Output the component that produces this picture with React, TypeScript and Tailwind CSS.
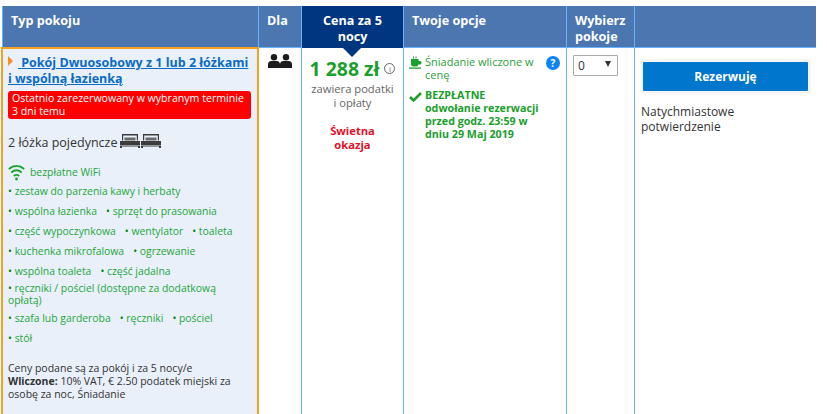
const font = { fontFamily: '"Open Sans", "Noto Sans", sans-serif' };

const facilityRows = [
  { items: ["wspólna łazienka", "sprzęt do prasowania"], cls: "mt-[7px]" },
  { items: ["część wypoczynkowa", "wentylator", "toaleta"], cls: "mt-[7px]" },
  { items: ["kuchenka mikrofalowa", "ogrzewanie"], cls: "mt-[7px]" },
  { items: ["wspólna toaleta", "część jadalna"], cls: "mt-[7px]" },
];

function Facility({ label }: { label: string }) {
  return (
    <span className="mr-[9px] whitespace-nowrap">
      <span className="text-[#008009]">•</span> {label}
    </span>
  );
}

function BedIcon() {
  return (
    <svg width="20" height="14" viewBox="0 0 20 14" fill="#3c3c3c" className="-mt-[4px]">
      <path d="M2 0h16v6.500h-1.200V1.500H3.200V6.500H2z" />
      <path d="M4.500 3.500h11v3h-11z" fill="#6a6a6a" />
      <path d="M0 7h20v4H0zM0 11.500h20v1H0zM0 12.500h2V14H0zM18 12.500h2V14h-2z" />
    </svg>
  );
}

function PersonIcon() {
  return (
    <svg width="12" height="14" viewBox="0 0 12 14" fill="#1c1c1c">
      <circle cx="6" cy="3.200" r="3.200" />
      <path d="M0 14v-3.500C0 8 1.500 7 3.500 7h5C10.500 7 12 8 12 10.500V14z" />
    </svg>
  );
}

function WifiIcon() {
  return (
    <svg width="17" height="17" viewBox="0 0 17 17" fill="none" stroke="#1aa32a" strokeWidth="1.800">
      <path d="M.8 5C5.500 1 11.500 1 16.200 5" />
      <path d="M3.300 8.500C6.500 5.800 10.500 5.800 13.700 8.500" />
      <path d="M5.800 12c1.600-1.300 3.800-1.300 5.400 0" />
      <circle cx="8.500" cy="15" r="1.400" fill="#1aa32a" stroke="none" />
    </svg>
  );
}

function CupIcon() {
  return (
    <svg width="13" height="13" viewBox="0 0 13 13" fill="#1a9e2c" className="mt-[1px] mr-[3px] shrink-0">
      <path d="M2 3h7.500v2H11a1.500 1.500 0 0 1 1.500 1.500v.500A1.500 1.500 0 0 1 11 8.500H9.300C9 10 8 10.500 7 10.500H4.500C3 10.500 2 9.500 2 8z" />
      <path d="M4 .5h1v2H4zM6.500 .5h1v2h-1z" />
      <path d="M0 11.500h12v1.300H0z" />
    </svg>
  );
}

function CheckIcon() {
  return (
    <svg width="13" height="13" viewBox="0 0 13 13" fill="none" stroke="#1a9e2c" strokeWidth="2.600" className="mt-[1px] mr-[3px] shrink-0">
      <path d="M1 7l3.500 3.500L12 3" />
    </svg>
  );
}

export default function App() {
  return (
    <div className="w-[827px] h-[414px] overflow-hidden bg-white pt-[6px] pl-[2px]" style={font}>
      <div className="w-[814px] grid grid-cols-[256px_43px_102px_163px_68px_182px] grid-rows-[42px_380px]">
        {/* header */}
        <div className="bg-[#4b76b0] border-b border-l border-[#66b3ff] text-white font-bold text-[12.600px] leading-[15.500px] pl-[8px] pt-[7px]">
          Typ pokoju
        </div>
        <div className="bg-[#4b76b0] border-b border-l border-[#66b3ff] text-white font-bold text-[12.600px] leading-[15.500px] pl-[8px] pt-[7px]">
          Dla
        </div>
        <div className="relative bg-[#003580] border-l border-[#66b3ff] text-white font-bold text-[12.600px] leading-[15.500px] text-center pt-[7px] px-[10px]">
          Cena za 5 nocy
          <div className="absolute left-[41px] top-[42px] w-0 h-0 border-x-[9px] border-x-transparent border-t-[9px] border-t-[#003580]" />
        </div>
        <div className="bg-[#4b76b0] border-b border-l border-[#66b3ff] text-white font-bold text-[12.600px] leading-[15.500px] pl-[8px] pt-[7px]">
          Twoje opcje
        </div>
        <div className="bg-[#4b76b0] border-b border-l border-[#66b3ff] text-white font-bold text-[12.600px] leading-[15.500px] pl-[8px] pt-[7px]">
          Wybierz pokoje
        </div>
        <div className="bg-[#4b76b0] border-b border-l border-[#66b3ff]" />

        {/* room */}
        <div className="relative z-10 -ml-px -mr-px bg-[#e9f0fa] border-2 border-[#f5a11f] -mt-px pl-[5px] pr-[3px] pt-[6px] text-[#1fa53a] text-[10.400px] leading-[13px]">
          <div className="text-[12.500px] leading-[16px] font-bold text-[#0b6bc4] underline whitespace-nowrap">
            <span className="inline-block align-[1px] mr-[5px] w-0 h-0 border-y-[5px] border-y-transparent border-l-[5px] border-l-[#f5901f]" />
            {" "}Pokój Dwuosobowy z 1 lub 2 łóżkami
            <br />
            i wspólną łazienką
          </div>
          <div className="mt-[4px] bg-[#ff0000] rounded-[3px] text-white text-[10.600px] leading-[13px] px-[4px] py-[1px] w-[243px] whitespace-nowrap">
            Ostatnio zarezerwowany w wybranym terminie
            <br />3 dni temu
          </div>
          <div className="mt-[15px] flex items-center gap-[1px] text-[#333] text-[12.500px] leading-[18px]">
            <span className="mr-[2px]">2 łóżka pojedyncze</span>
            <BedIcon />
            <BedIcon />
          </div>
          <div className="mt-[12px] flex items-center gap-[5px]">
            <WifiIcon />
            <span>bezpłatne WiFi</span>
          </div>
          <div className="mt-[4px]">
            <Facility label="zestaw do parzenia kawy i herbaty" />
          </div>
          {facilityRows.map((row) => (
            <div key={row.items[0]} className={row.cls}>
              {row.items.map((item) => (
                <Facility key={item} label={item} />
              ))}
            </div>
          ))}
          <div className="mt-[4px] leading-[12px]">
            <span className="text-[#008009]">•</span> ręczniki / pościel (dostępne za dodatkową
            <br />
            opłatą)
          </div>
          <div className="mt-[6px]">
            <Facility label="szafa lub garderoba" />
            <Facility label="ręczniki" />
            <Facility label="pościel" />
          </div>
          <div className="mt-[7px]">
            <Facility label="stół" />
          </div>
          <div className="mt-[17px] text-[#333] text-[10.500px]">
            Ceny podane są za pokój i za 5 nocy/e
            <br />
            <b>Wliczone:</b> 10% VAT, € 2.50 podatek miejski za osobę za noc, Śniadanie
          </div>
        </div>

        {/* people */}
        <div className="border-l border-[#66b3ff] pl-[9px] pt-[6px] flex items-start">
          <PersonIcon />
          <PersonIcon />
        </div>

        {/* price */}
        <div className="border-l border-[#66b3ff] text-center pt-[9px]">
          <div className="flex items-center justify-center gap-[5px] text-[#1a9e2c] font-bold text-[19.400px] leading-[23px]">
            1 288 zł
            <span className="w-[11px] h-[11px] rounded-full border border-[#666] text-[#666] text-[8px] leading-[9px] font-normal">
              i
            </span>
          </div>
          <div className="mt-[2px] text-[#666] text-[11.200px] leading-[13.500px]">
            zawiera podatki
            <br />i opłaty
          </div>
          <div className="mt-[15px] text-[#e0102a] font-bold text-[11.200px] leading-[14px]">
            Świetna
            <br />okazja
          </div>
        </div>

        {/* options */}
        <div className="border-l border-[#66b3ff] pt-[7px] pl-[5px] pr-[5px] text-[11px] leading-[13.300px] text-[#1a9e2c]">
          <div className="flex">
            <CupIcon />
            <span className="w-[115px] text-[#2aa03a]">Śniadanie wliczone w cenę</span>
            <span className="ml-auto mt-[1px] mr-[1px] w-[14px] h-[14px] rounded-full bg-[#0a84f0] text-white font-bold text-[10px] leading-[14px] text-center">
              ?
            </span>
          </div>
          <div className="flex mt-[7px] font-bold text-[10.700px]">
            <CheckIcon />
            <span className="w-[125px]">
              BEZPŁATNE
              <br />
              odwołanie rezerwacji przed godz. 23:59 w dniu 29 Maj 2019
            </span>
          </div>
        </div>

        {/* rooms */}
        <div className="border-l border-[#66b3ff] pl-[6px] pt-[7px]">
          <div className="w-[45px] h-[21px] border border-[#aaa] rounded-[1px] bg-white flex items-center justify-between pl-[4px] pr-[6px] text-[12px] text-[#333]">
            0
            <span className="w-0 h-0 border-x-[3px] border-x-transparent border-t-[6px] border-t-[#333] mb-[3px]" />
          </div>
        </div>

        {/* reserve */}
        <div className="border-l border-[#66b3ff] pl-[6px] pr-[6px] pt-[14px]">
          <div className="mx-[2px]">
            <button className="w-full h-[29px] bg-[#0077cc] border-0 rounded-[1px] text-white font-bold text-[12px] shadow-[0_0_0_2px_#f4f4f4,0_0_2px_2px_#ddd]">
              Rezerwuję
            </button>
          </div>
          <div className="mt-[13px] text-[#333] text-[12px] leading-[15px]">
            Natychmiastowe
            <br />
            potwierdzenie
          </div>
        </div>
      </div>
    </div>
  );
}
